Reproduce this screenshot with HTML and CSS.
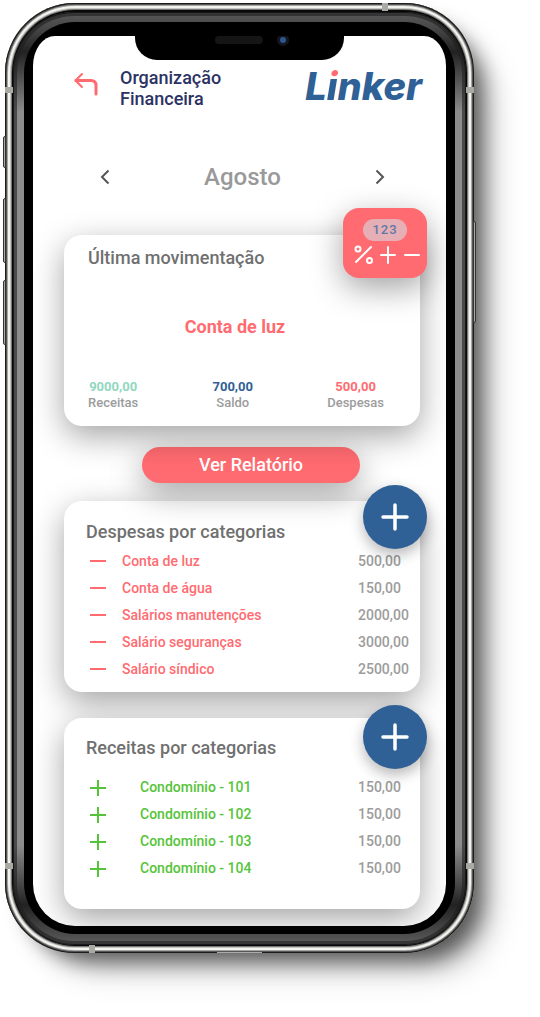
FILE: index.html
```html
<!DOCTYPE html>
<html lang="pt-BR">
<head>
<meta charset="utf-8">
<meta name="viewport" content="width=device-width, initial-scale=1">
<title>Organização Financeira</title>
<link rel="stylesheet" href="styles.css">
</head>
<body>
<div class="phone">
  <span class="key key-mute"></span>
  <span class="key key-up"></span>
  <span class="key key-down"></span>
  <span class="key key-power"></span>
  <div class="band">
    <div class="bezel">
      <main class="screen">
        <div class="notch"><span class="speaker"></span><span class="camera"></span></div>
        <header class="header">
          <button class="icon-button" aria-label="Voltar">
            <svg width="24" height="24" viewBox="0 0 24 24" fill="none" stroke="#ff6b70" stroke-width="3" stroke-linecap="round" stroke-linejoin="round"><path d="M2 8.500H17Q22 8.500 22 13.500V22"/><path stroke-width="2" d="M8 2 1.500 8.500 8 15"/></svg>
          </button>
          <h1 class="title">Organização Financeira</h1>
          <div class="logo">L<span class="logo-i">i</span>nker</div>
        </header>
        <nav class="month">
          <button class="icon-button" aria-label="Mês anterior">
            <svg width="12" height="16" viewBox="0 0 12 16" fill="none" stroke="#555" stroke-width="2"><path d="M9.500 1.500 3 8l6.500 6.500"/></svg>
          </button>
          <span class="month-name">Agosto</span>
          <button class="icon-button" aria-label="Próximo mês">
            <svg width="12" height="16" viewBox="0 0 12 16" fill="none" stroke="#555" stroke-width="2"><path d="M2.500 1.500 9 8l-6.500 6.500"/></svg>
          </button>
        </nav>
        <section class="card card-last">
          <h2 class="card-title">Última movimentação</h2>
          <button class="calculator" aria-label="Calculadora">
            <span class="digits">123</span>
            <svg width="66" height="20" viewBox="0 0 66 20" fill="none" stroke="#fff" stroke-width="2" stroke-linecap="round"><circle cx="4" cy="4" r="2.500"/><circle cx="15.500" cy="15.500" r="2.500"/><path d="M17 2 2 17M27 10H41M34 2V18M51 10H65"/></svg>
          </button>
          <p class="last-item">Conta de luz</p>
          <dl class="stats">
            <div class="stat"><dt>Receitas</dt><dd class="mint">9000,00</dd></div>
            <div class="stat"><dt>Saldo</dt><dd class="blue">700,00</dd></div>
            <div class="stat"><dt>Despesas</dt><dd class="coral">500,00</dd></div>
          </dl>
        </section>
        <button class="report">Ver Relatório</button>
        <section class="card card-expenses">
          <h2 class="card-title">Despesas por categorias</h2>
          <button class="add" aria-label="Adicionar despesa">
            <svg width="28" height="28" viewBox="0 0 28 28" stroke="#fff" stroke-width="3.500" stroke-linecap="round"><path d="M2 14H26M14 2V26"/></svg>
          </button>
          <table class="entries expenses">
            <tr><td class="sign"><svg width="16" height="16" viewBox="0 0 16 16"><path d="M0 7H16"/></svg></td><th scope="row">Conta de luz</th><td class="value">500,00</td></tr>
            <tr><td class="sign"><svg width="16" height="16" viewBox="0 0 16 16"><path d="M0 7H16"/></svg></td><th scope="row">Conta de água</th><td class="value">150,00</td></tr>
            <tr><td class="sign"><svg width="16" height="16" viewBox="0 0 16 16"><path d="M0 7H16"/></svg></td><th scope="row">Salários manutenções</th><td class="value">2000,00</td></tr>
            <tr><td class="sign"><svg width="16" height="16" viewBox="0 0 16 16"><path d="M0 7H16"/></svg></td><th scope="row">Salário seguranças</th><td class="value">3000,00</td></tr>
            <tr><td class="sign"><svg width="16" height="16" viewBox="0 0 16 16"><path d="M0 7H16"/></svg></td><th scope="row">Salário síndico</th><td class="value">2500,00</td></tr>
          </table>
        </section>
        <section class="card card-income">
          <h2 class="card-title">Receitas por categorias</h2>
          <button class="add" aria-label="Adicionar receita">
            <svg width="28" height="28" viewBox="0 0 28 28" stroke="#fff" stroke-width="3.500" stroke-linecap="round"><path d="M2 14H26M14 2V26"/></svg>
          </button>
          <table class="entries income">
            <tr><td class="sign"><svg width="16" height="16" viewBox="0 0 16 16"><path d="M0 8H16M8 0V16"/></svg></td><th scope="row">Condomínio - 101</th><td class="value">150,00</td></tr>
            <tr><td class="sign"><svg width="16" height="16" viewBox="0 0 16 16"><path d="M0 8H16M8 0V16"/></svg></td><th scope="row">Condomínio - 102</th><td class="value">150,00</td></tr>
            <tr><td class="sign"><svg width="16" height="16" viewBox="0 0 16 16"><path d="M0 8H16M8 0V16"/></svg></td><th scope="row">Condomínio - 103</th><td class="value">150,00</td></tr>
            <tr><td class="sign"><svg width="16" height="16" viewBox="0 0 16 16"><path d="M0 8H16M8 0V16"/></svg></td><th scope="row">Condomínio - 104</th><td class="value">150,00</td></tr>
          </table>
        </section>
      </main>
    </div>
  </div>
  <span class="antenna antenna-top"></span>
  <span class="antenna antenna-left-top"></span>
  <span class="antenna antenna-right-top"></span>
  <span class="antenna antenna-left-bottom"></span>
  <span class="antenna antenna-right-bottom"></span>
  <span class="antenna antenna-bottom"></span>
  <span class="port"></span>
</div>
</body>
</html>
```

FILE: styles.css
```css
* { box-sizing: border-box; }

body {
  margin: 0;
  padding: 3px 66px 64px 5px;
  background: #fff;
  font-family: Roboto, "Liberation Sans", sans-serif;
  font-weight: 500;
  color: #707070;
}

h1, h2, p, dl, dd { margin: 0; }

button {
  border: 0;
  padding: 0;
  background: none;
  font: inherit;
  cursor: pointer;
}

svg { display: block; }

/* Phone body */
.phone {
  position: relative;
  padding: 9px 8px 8px;
  border-radius: 70px;
  background: #080808;
  box-shadow:
    inset 0 0 0 1px #1c1c1c,
    inset 0 0 0 2px #555,
    inset 0 0 0 3px #a5a5a2,
    inset 0 0 0 5px #f2f3ee,
    inset 0 0 0 6px #c4c5c0,
    inset 0 0 0 7px #777,
    14px 14px 20px -6px rgba(0, 0, 0, .5),
    26px 26px 34px -14px rgba(0, 0, 0, .35);
}

.band {
  padding: 10px 11px 11px;
  border-radius: 61px;
  background: linear-gradient(#585858, #4a4a4a 14px, #222 40px, #8c8c8c 100px, #8c8c8c calc(100% - 100px), #222 calc(100% - 40px), #5c5c5c);
  box-shadow: inset 0 0 0 1px #181818, inset 0 0 0 4px rgba(30, 30, 30, .6);
}

.bezel {
  padding: 14px 9px 8px;
  border-radius: 51px;
  background: #000;
}

.screen {
  position: relative;
  display: flex;
  flex-direction: column;
  padding: 31px 26px 17px 31px;
  border-radius: 22px 22px 42px 42px / 30px 30px 42px 42px;
  background: #fff;
  overflow: hidden;
}

.notch {
  position: absolute;
  top: 0;
  left: 102px;
  right: 102px;
  height: 24px;
  border-radius: 0 0 22px 22px;
  background: #000;
}

.speaker {
  position: absolute;
  top: 0;
  left: 80px;
  width: 48px;
  height: 8px;
  border-radius: 4px;
  background: #151515;
}

.camera {
  position: absolute;
  top: -2px;
  left: 142px;
  width: 12px;
  height: 12px;
  border: 3px solid #14161b;
  border-radius: 50%;
  background: #2c568f;
}

.key {
  position: absolute;
  left: -2px;
  width: 3px;
  border: 1px solid #333;
  border-radius: 2px 0 0 2px;
  background: #aaa;
}
.key-mute { top: 133px; height: 32px; }
.key-up { top: 195px; height: 65px; }
.key-down { top: 277px; height: 65px; }
.key-power { top: 218px; left: auto; right: -2px; height: 102px; border-radius: 0 2px 2px 0; }

.antenna { position: absolute; width: 8px; height: 6px; background: #a9aaa4; }
.antenna-top { top: 0; right: 86px; width: 6px; height: 8px; }
.antenna-left-top { top: 84px; left: 0; }
.antenna-right-top { top: 84px; right: 0; }
.antenna-left-bottom { bottom: 84px; left: 0; }
.antenna-right-bottom { bottom: 84px; right: 0; }
.antenna-bottom { bottom: 0; left: 84px; width: 6px; height: 8px; }

.port {
  position: absolute;
  bottom: 0;
  left: 212px;
  right: 212px;
  height: 1px;
  background: #aaa;
}

/* Header */
.header {
  display: flex;
  align-items: flex-start;
  padding: 0 0 0 10px;
}

.header .icon-button { margin: 5px 22px 0 0; }

.title {
  flex: 1;
  max-width: 120px;
  font-size: 18px;
  font-weight: 500;
  line-height: 21px;
  color: #2c3263;
}

.logo {
  margin: 0 -2px 0 auto;
  font-family: Inter, sans-serif;
  font-size: 38px;
  font-style: italic;
  font-weight: 800;
  line-height: 38px;
  color: #2f6096;
}

.logo-i {
  background: linear-gradient(#ff6b70 15px, #2f6096 15px);
  background-clip: text;
  -webkit-background-clip: text;
  color: transparent;
}

.month {
  display: flex;
  align-items: center;
  justify-content: space-between;
  margin: 52px 0 42px;
  padding: 0 34px 0 35px;
}

.month-name {
  font-size: 24px;
  font-weight: 500;
  line-height: 32px;
  color: #999;
}

/* Cards */
.card {
  position: relative;
  border-radius: 18px;
  background: #fff;
  box-shadow: 0 10px 32px rgba(0, 0, 0, .36);
}

.card-last { z-index: 2; padding: 12px 24px 15px; }
.card-expenses { padding: 20px 10px 9px 22px; }
.card-income { margin-top: 26px; padding: 19px 10px 27px 22px; }

.card-title {
  font-size: 18px;
  font-weight: 500;
  line-height: 22px;
}

.calculator {
  position: absolute;
  top: -27px;
  right: -7px;
  width: 84px;
  height: 70px;
  display: flex;
  flex-direction: column;
  align-items: center;
  gap: 4px;
  padding: 11px 4px 0 8px;
  border-radius: 16px;
  background: #ff6b70;
  box-shadow: 0 10px 32px rgba(0, 0, 0, .36);
}

.digits {
  width: 44px;
  margin-right: 4px;
  border-radius: 11px;
  background: #e5afb5;
  font-size: 13px;
  font-weight: 500;
  letter-spacing: 1px;
  line-height: 22px;
  color: #5f79a8;
}

.last-item {
  margin: 47px 0 41px;
  padding-right: 14px;
  font-size: 18px;
  font-weight: 700;
  line-height: 22px;
  text-align: center;
  color: #ff6b70;
}

.stats {
  display: flex;
  justify-content: space-between;
  padding-right: 12px;
  font-size: 13px;
  line-height: 16px;
  text-align: center;
}

.stat { display: flex; flex-direction: column-reverse; }
.stat dt { font-weight: 500; color: #9c9c9c; }
.stat dd { font-weight: 700; }
.mint { color: #91d8bf; }
.blue { color: #2f6096; }
.coral { color: #ff6b70; }

.report {
  position: relative;
  z-index: 1;
  align-self: center;
  width: 61%;
  margin: 21px 0 18px 18px;
  border-radius: 18px;
  background: #ff6b70;
  box-shadow: 0 10px 32px rgba(0, 0, 0, .36);
  font-size: 18px;
  line-height: 36px;
  color: #fff;
}

.add {
  position: absolute;
  z-index: 3;
  top: -16px;
  right: -7px;
  width: 64px;
  height: 64px;
  display: grid;
  place-items: center;
  border-radius: 50%;
  background: #2f6096;
  box-shadow: 0 6px 14px rgba(0, 0, 0, .28);
}

.card-income .add { top: -13px; }

.entries {
  width: 100%;
  table-layout: fixed;
  border-collapse: collapse;
  font-size: 14px;
  line-height: 27px;
}

.expenses { margin-top: 5px; color: #ff6b70; }
.income { margin-top: 15px; color: #56c43a; }
.entries td, .entries th { padding: 0; text-align: left; font-weight: 500; }
.entries .sign { width: 36px; padding-left: 4px; }
.income .sign { width: 54px; }
.sign svg { fill: none; stroke: currentColor; stroke-width: 2; }
.entries .value { width: 52px; font-weight: 500; color: #9c9c9c; }
```
